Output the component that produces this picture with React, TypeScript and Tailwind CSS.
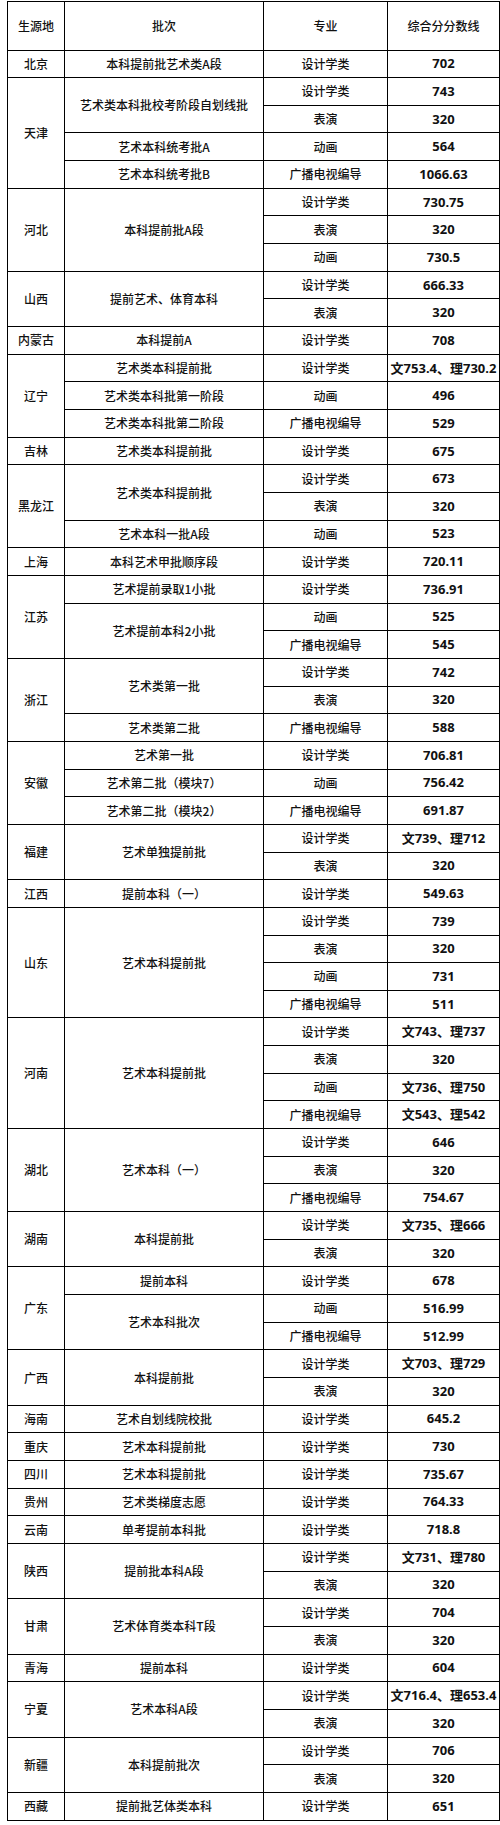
type Major = [string, string];

interface Batch {
  name: string;
  majors: Major[];
}

interface Province {
  name: string;
  batches: Batch[];
}

const D: Major = ['设计学类', ''];

function m(name: string, score: string): Major {
  return [name, score];
}

const rows: Province[] = [
  { name: '北京', batches: [{ name: '本科提前批艺术类A段', majors: [m('设计学类', '702')] }] },
  {
    name: '天津',
    batches: [
      { name: '艺术类本科批校考阶段自划线批', majors: [m('设计学类', '743'), m('表演', '320')] },
      { name: '艺术本科统考批A', majors: [m('动画', '564')] },
      { name: '艺术本科统考批B', majors: [m('广播电视编导', '1066.63')] },
    ],
  },
  {
    name: '河北',
    batches: [{ name: '本科提前批A段', majors: [m('设计学类', '730.75'), m('表演', '320'), m('动画', '730.5')] }],
  },
  {
    name: '山西',
    batches: [{ name: '提前艺术、体育本科', majors: [m('设计学类', '666.33'), m('表演', '320')] }],
  },
  { name: '内蒙古', batches: [{ name: '本科提前A', majors: [m('设计学类', '708')] }] },
  {
    name: '辽宁',
    batches: [
      { name: '艺术类本科提前批', majors: [m('设计学类', '文753.4、理730.2')] },
      { name: '艺术类本科批第一阶段', majors: [m('动画', '496')] },
      { name: '艺术类本科批第二阶段', majors: [m('广播电视编导', '529')] },
    ],
  },
  { name: '吉林', batches: [{ name: '艺术类本科提前批', majors: [m('设计学类', '675')] }] },
  {
    name: '黑龙江',
    batches: [
      { name: '艺术类本科提前批', majors: [m('设计学类', '673'), m('表演', '320')] },
      { name: '艺术本科一批A段', majors: [m('动画', '523')] },
    ],
  },
  { name: '上海', batches: [{ name: '本科艺术甲批顺序段', majors: [m('设计学类', '720.11')] }] },
  {
    name: '江苏',
    batches: [
      { name: '艺术提前录取1小批', majors: [m('设计学类', '736.91')] },
      { name: '艺术提前本科2小批', majors: [m('动画', '525'), m('广播电视编导', '545')] },
    ],
  },
  {
    name: '浙江',
    batches: [
      { name: '艺术类第一批', majors: [m('设计学类', '742'), m('表演', '320')] },
      { name: '艺术类第二批', majors: [m('广播电视编导', '588')] },
    ],
  },
  {
    name: '安徽',
    batches: [
      { name: '艺术第一批', majors: [m('设计学类', '706.81')] },
      { name: '艺术第二批（模块7）', majors: [m('动画', '756.42')] },
      { name: '艺术第二批（模块2）', majors: [m('广播电视编导', '691.87')] },
    ],
  },
  {
    name: '福建',
    batches: [{ name: '艺术单独提前批', majors: [m('设计学类', '文739、理712'), m('表演', '320')] }],
  },
  { name: '江西', batches: [{ name: '提前本科（一）', majors: [m('设计学类', '549.63')] }] },
  {
    name: '山东',
    batches: [
      {
        name: '艺术本科提前批',
        majors: [m('设计学类', '739'), m('表演', '320'), m('动画', '731'), m('广播电视编导', '511')],
      },
    ],
  },
  {
    name: '河南',
    batches: [
      {
        name: '艺术本科提前批',
        majors: [
          m('设计学类', '文743、理737'),
          m('表演', '320'),
          m('动画', '文736、理750'),
          m('广播电视编导', '文543、理542'),
        ],
      },
    ],
  },
  {
    name: '湖北',
    batches: [
      { name: '艺术本科（一）', majors: [m('设计学类', '646'), m('表演', '320'), m('广播电视编导', '754.67')] },
    ],
  },
  {
    name: '湖南',
    batches: [{ name: '本科提前批', majors: [m('设计学类', '文735、理666'), m('表演', '320')] }],
  },
  {
    name: '广东',
    batches: [
      { name: '提前本科', majors: [m('设计学类', '678')] },
      { name: '艺术本科批次', majors: [m('动画', '516.99'), m('广播电视编导', '512.99')] },
    ],
  },
  {
    name: '广西',
    batches: [{ name: '本科提前批', majors: [m('设计学类', '文703、理729'), m('表演', '320')] }],
  },
  { name: '海南', batches: [{ name: '艺术自划线院校批', majors: [m('设计学类', '645.2')] }] },
  { name: '重庆', batches: [{ name: '艺术本科提前批', majors: [m('设计学类', '730')] }] },
  { name: '四川', batches: [{ name: '艺术本科提前批', majors: [m('设计学类', '735.67')] }] },
  { name: '贵州', batches: [{ name: '艺术类梯度志愿', majors: [m('设计学类', '764.33')] }] },
  { name: '云南', batches: [{ name: '单考提前本科批', majors: [m('设计学类', '718.8')] }] },
  {
    name: '陕西',
    batches: [{ name: '提前批本科A段', majors: [m('设计学类', '文731、理780'), m('表演', '320')] }],
  },
  {
    name: '甘肃',
    batches: [{ name: '艺术体育类本科T段', majors: [m('设计学类', '704'), m('表演', '320')] }],
  },
  { name: '青海', batches: [{ name: '提前本科', majors: [m('设计学类', '604')] }] },
  {
    name: '宁夏',
    batches: [{ name: '艺术本科A段', majors: [m('设计学类', '文716.4、理653.4'), m('表演', '320')] }],
  },
  {
    name: '新疆',
    batches: [{ name: '本科提前批次', majors: [m('设计学类', '706'), m('表演', '320')] }],
  },
  { name: '西藏', batches: [{ name: '提前批艺体类本科', majors: [m('设计学类', '651')] }] },
];

void D;

const cjk = "font-['Noto_Sans_CJK_SC',sans-serif] text-[12px] font-medium text-[#111]";
const num = "font-['Noto_Sans','Noto_Sans_CJK_SC',sans-serif] text-[13px] font-bold text-[#111]";
const cell = 'border border-black text-center align-middle p-0 leading-none';

export default function App() {
  const body: React.ReactNode[] = [];

  rows.forEach((p) => {
    const total = p.batches.reduce((s, b) => s + b.majors.length, 0);
    let first = true;
    p.batches.forEach((b, bi) => {
      b.majors.forEach((mj, mi) => {
        body.push(
          <tr key={`${p.name}-${bi}-${mi}`} className="h-[27.67px]">
            {first && (
              <td rowSpan={total} className={`${cell} ${cjk}`}>
                {p.name}
              </td>
            )}
            {mi === 0 && (
              <td rowSpan={b.majors.length} className={`${cell} ${cjk}`}>
                {b.name}
              </td>
            )}
            <td className={`${cell} ${cjk}`}>{mj[0]}</td>
            <td className={`${cell} ${num}`}>{mj[1]}</td>
          </tr>
        );
        first = false;
      });
    });
  });

  return (
    <div className="bg-white w-[500px] h-[1825px] pt-[1px]">
      <table className="ml-[7px] w-[493px] border-collapse table-fixed">
        <colgroup>
          <col className="w-[57px]" />
          <col className="w-[199px]" />
          <col className="w-[124px]" />
          <col />
        </colgroup>
        <thead>
          <tr className="h-[48.5px]">
            <th className={`${cell} ${cjk}`}>生源地</th>
            <th className={`${cell} ${cjk}`}>批次</th>
            <th className={`${cell} ${cjk}`}>专业</th>
            <th className={`${cell} ${cjk}`}>综合分分数线</th>
          </tr>
        </thead>
        <tbody>{body}</tbody>
      </table>
    </div>
  );
}
